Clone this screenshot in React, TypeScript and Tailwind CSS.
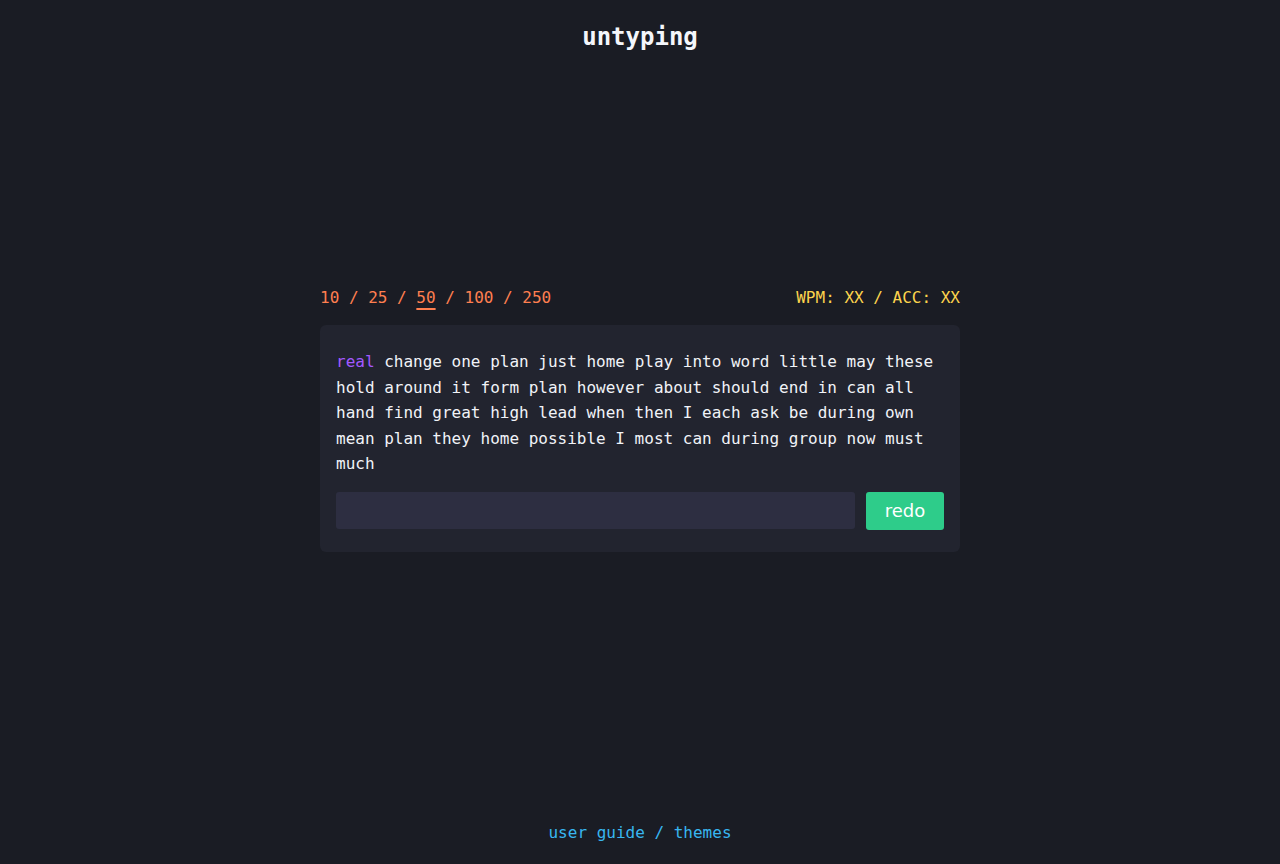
import React from "react";

const mono = { fontFamily: '"DejaVu Sans Mono", "Liberation Mono", monospace' };

export default function App() {
  const words =
    "change one plan just home play into word little may these hold around it form plan however about should end in can all hand find great high lead when then I each ask be during own mean plan they home possible I most can during group now must much";
  return (
    <div
      className="h-[864px] w-full bg-[#1a1c24] flex flex-col items-center text-[#eceff4]"
      style={mono}
    >
      <h1 className="pt-[21px] text-2xl leading-8 font-bold text-[#f4f6fb]">untyping</h1>

      <div className="mt-[233px] w-[640px] flex flex-col">
        <div className="flex justify-between text-base leading-6">
          <div className="text-[#ff7f50]">
            <span>10</span> / <span>25</span> /{" "}
            <span className="underline decoration-2 underline-offset-[5px]">50</span> /{" "}
            <span>100</span> / <span>250</span>
          </div>
          <div className="text-[#fcd34d]">WPM: XX / ACC: XX</div>
        </div>

        <div className="mt-[15px] rounded-md bg-[#22242f] px-4 pt-[24px] pb-[22px]">
          <p className="text-base leading-[25.6px] text-[#f1f3f8]">
            <span className="text-[#a259ff]">real</span> {words}
          </p>
          <div className="mt-[15px] flex gap-[11px]">
            <div className="h-[37px] flex-1 rounded-[3px] bg-[#2d2e41]" />
            <button
              className="h-[38px] w-[78px] rounded-[3px] bg-[#2ecc8a] text-white text-[18px]"
              style={{ fontFamily: '"DejaVu Sans", "Liberation Sans", sans-serif' }}
            >
              redo
            </button>
          </div>
        </div>
      </div>

      <div className="mt-auto pb-[19px] text-base leading-6 text-[#38b6f0]">
        user guide / themes
      </div>
    </div>
  );
}
